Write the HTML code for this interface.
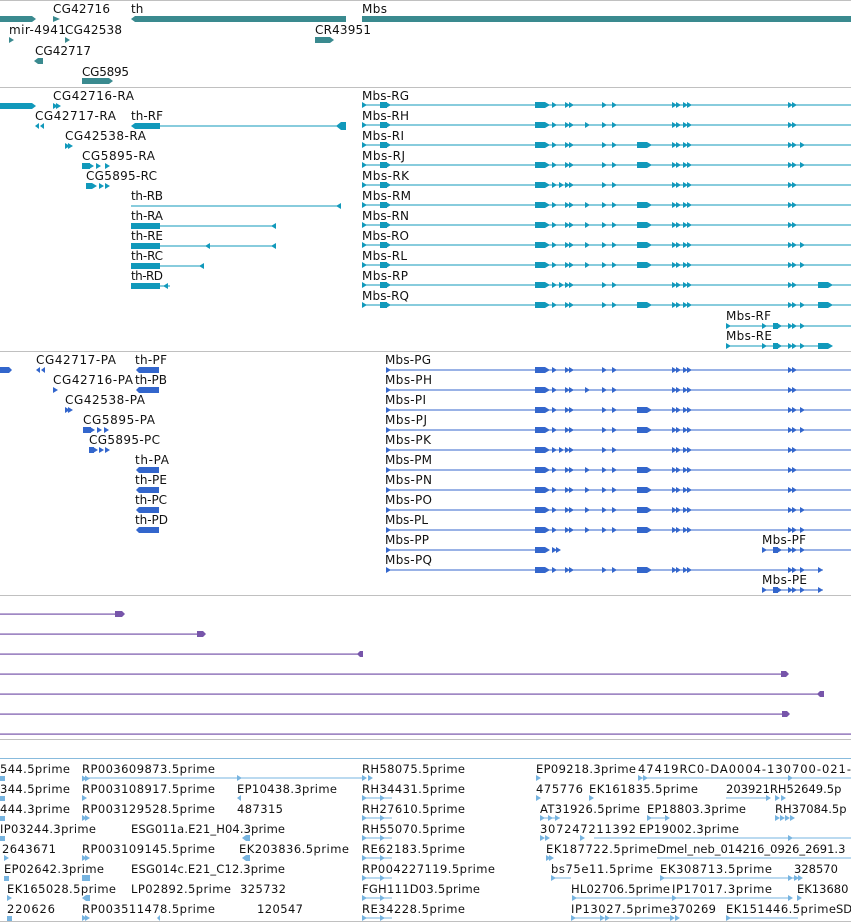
<!DOCTYPE html>
<html><head><meta charset="utf-8"><style>
html,body{margin:0;padding:0;background:#fff;}
svg{display:block;}
text{font-family:"DejaVu Sans","Liberation Sans",sans-serif;font-size:12px;fill:#111;}
.b text{font-size:11.5px;}
</style></head><body>
<svg width="851" height="923" viewBox="0 0 851 923" xmlns="http://www.w3.org/2000/svg">
<defs>
<polygon id="a" points="0,-3 5,0 0,3"/>
<g id="core">
 <rect x="535" y="-3" width="10" height="6"/><use href="#a" x="545"/>
 <use href="#a" x="552"/><use href="#a" x="565"/><use href="#a" x="569"/>
 <use href="#a" x="602"/><use href="#a" x="612"/>
 <use href="#a" x="672"/><use href="#a" x="676"/><use href="#a" x="683"/><use href="#a" x="687"/>
 <use href="#a" x="788"/><use href="#a" x="792"/>
</g>
<g id="x585"><use href="#a" x="585"/></g>
<g id="x637"><rect x="637" y="-3" width="10" height="6"/><use href="#a" x="647"/></g>
<g id="x800"><use href="#a" x="800"/></g>
<g id="x818"><rect x="818" y="-3" width="10" height="6"/><use href="#a" x="828"/></g>
<g id="rs"><rect x="362" y="-0.5" width="489" height="1"/><use href="#a" x="362"/><rect x="380" y="-3" width="7" height="6"/><use href="#a" x="386"/></g>
<g id="ps"><rect x="386" y="-0.5" width="465" height="1"/><use href="#a" x="386"/></g>
</defs>

<rect x="0" y="0" width="851" height="1" fill="#c0c0c0"/>
<rect x="0" y="87" width="851" height="1" fill="#c0c0c0"/>
<rect x="0" y="351" width="851" height="1" fill="#c0c0c0"/>
<rect x="0" y="595" width="851" height="1" fill="#c0c0c0"/>
<rect x="0" y="739" width="851" height="1" fill="#c0c0c0"/>
<rect x="0" y="758" width="851" height="1" fill="#88bbdd"/>
<rect x="0" y="921" width="851" height="1" fill="#c0c0c0"/>

<g fill="#3a8a8f">
 <rect x="0" y="16" width="32" height="6"/><polygon points="32,16 36,19 32,22"/>
 <polygon points="53,16 60,19 53,22"/>
 <rect x="135" y="16" width="211" height="6"/><polygon points="131,19 135,16 135,22"/>
 <rect x="362" y="16" width="489" height="6"/>
 <polygon points="9,37 14,40 9,43"/><polygon points="65,37 70,40 65,43"/>
 <rect x="315" y="37" width="15" height="6"/><polygon points="330,37 334,40 330,43"/>
 <rect x="38" y="58" width="5" height="6"/><polygon points="34,61 38,58 38,64"/>
 <rect x="82" y="78" width="27" height="6"/><polygon points="109,78 113,81 109,84"/>
</g>
<text x="53" y="13" textLength="57">CG42716</text>
<text x="131" y="13">th</text>
<text x="362" y="13" textLength="25">Mbs</text>
<text x="9" y="34" textLength="57">mir-4941</text>
<text x="65" y="34" textLength="57">CG42538</text>
<text x="315" y="34" textLength="56">CR43951</text>
<text x="35" y="55" textLength="56">CG42717</text>
<text x="82" y="76" textLength="47">CG5895</text>

<g fill="#1199bb">
 <rect x="0" y="103" width="32" height="6"/><polygon points="32,103 36,106 32,109"/>
 <use href="#a" x="53" y="106"/><use href="#a" x="56" y="106"/>
 <polygon points="35,126 39,123 39,129"/><polygon points="40,126 44,123 44,129"/>
 <rect x="135" y="123" width="25" height="6"/><polygon points="131,126 135,123 135,129"/>
 <rect x="160" y="125.5" width="186" height="1"/><polygon points="336,126 341,122 346,122 346,130 341,130"/>
 <use href="#a" x="65" y="146"/><use href="#a" x="68" y="146"/>
 <rect x="82" y="163" width="8" height="6"/><use href="#a" x="89" y="166"/><use href="#a" x="96" y="166"/><use href="#a" x="105" y="166"/>
 <rect x="86" y="183" width="6" height="6"/><use href="#a" x="92" y="186"/><use href="#a" x="105" y="186"/><use href="#a" x="99" y="186"/>
 <rect x="131" y="205.5" width="210" height="1"/><polygon points="336,206 341,203 341,209"/>
 <rect x="131" y="223" width="29" height="6"/><rect x="160" y="225.5" width="116" height="1"/><polygon points="271,226 276,223 276,229"/>
 <rect x="131" y="243" width="29" height="6"/><rect x="160" y="245.5" width="116" height="1"/><polygon points="205,246 210,243 210,249"/><polygon points="271,246 276,243 276,249"/>
 <rect x="131" y="263" width="29" height="6"/><rect x="160" y="265.5" width="44" height="1"/><polygon points="199,266 204,263 204,269"/>
 <rect x="131" y="283" width="29" height="6"/><rect x="160" y="285.5" width="10" height="1"/><polygon points="163,286 168,283 168,289"/>

 <use href="#rs" y="105"/><use href="#core" y="105"/>
 <use href="#rs" y="125"/><use href="#core" y="125"/><use href="#x585" y="125"/>
 <use href="#rs" y="145"/><use href="#core" y="145"/><use href="#x637" y="145"/><use href="#x800" y="145"/>
 <use href="#rs" y="165"/><use href="#core" y="165"/><use href="#x637" y="165"/><use href="#x800" y="165"/>
 <use href="#rs" y="185"/><use href="#core" y="185"/><use href="#a" x="559" y="185"/>
 <use href="#rs" y="205"/><use href="#core" y="205"/><use href="#x585" y="205"/><use href="#x637" y="205"/>
 <use href="#rs" y="225"/><use href="#core" y="225"/><use href="#x585" y="225"/><use href="#x637" y="225"/>
 <use href="#rs" y="245"/><use href="#core" y="245"/><use href="#x585" y="245"/><use href="#x637" y="245"/><use href="#x800" y="245"/>
 <use href="#rs" y="265"/><use href="#core" y="265"/><use href="#x585" y="265"/><use href="#x637" y="265"/><use href="#x800" y="265"/>
 <use href="#rs" y="285"/><use href="#core" y="285"/><use href="#a" x="559" y="285"/><use href="#x818" y="285"/>
 <use href="#rs" y="305"/><use href="#core" y="305"/><use href="#x637" y="305"/><use href="#x800" y="305"/><use href="#x818" y="305"/>
 <rect x="726" y="325.5" width="125" height="1"/><use href="#a" x="726" y="326"/><use href="#a" x="762" y="326"/><rect x="773" y="323" width="5" height="6"/><use href="#a" x="777" y="326"/><use href="#a" x="788" y="326"/><use href="#a" x="792" y="326"/><use href="#a" x="800" y="326"/>
 <rect x="726" y="345.5" width="106" height="1"/><use href="#a" x="726" y="346"/><use href="#a" x="762" y="346"/><rect x="773" y="343" width="5" height="6"/><use href="#a" x="777" y="346"/><use href="#a" x="788" y="346"/><use href="#a" x="792" y="346"/><use href="#a" x="800" y="346"/><use href="#x818" y="346"/>
</g>
<text x="53" y="100" textLength="81">CG42716-RA</text>
<text x="35" y="120" textLength="81">CG42717-RA</text>
<text x="131" y="120" textLength="32">th-RF</text>
<text x="65" y="140" textLength="81">CG42538-RA</text>
<text x="82" y="160" textLength="73">CG5895-RA</text>
<text x="86" y="180" textLength="71">CG5895-RC</text>
<text x="131" y="200" textLength="32">th-RB</text>
<text x="131" y="220" textLength="32">th-RA</text>
<text x="131" y="240" textLength="32">th-RE</text>
<text x="131" y="260" textLength="32">th-RC</text>
<text x="131" y="280" textLength="32">th-RD</text>
<text x="362" y="100" textLength="47">Mbs-RG</text>
<text x="362" y="120" textLength="47">Mbs-RH</text>
<text x="362" y="140" textLength="42">Mbs-RI</text>
<text x="362" y="160" textLength="43">Mbs-RJ</text>
<text x="362" y="180" textLength="47">Mbs-RK</text>
<text x="362" y="200" textLength="49">Mbs-RM</text>
<text x="362" y="220" textLength="47">Mbs-RN</text>
<text x="362" y="240" textLength="47">Mbs-RO</text>
<text x="362" y="260" textLength="45">Mbs-RL</text>
<text x="362" y="280" textLength="46">Mbs-RP</text>
<text x="362" y="300" textLength="47">Mbs-RQ</text>
<text x="726" y="320" textLength="45">Mbs-RF</text>
<text x="726" y="340" textLength="46">Mbs-RE</text>

<g fill="#3366cc">
 <rect x="0" y="367" width="9" height="6"/><polygon points="9,367 12,370 9,373"/>
 <polygon points="36,370 40,367 40,373"/><polygon points="41,370 45,367 45,373"/>
 <rect x="139" y="367" width="20" height="6"/><polygon points="136,370 139,367 139,373"/>
 <use href="#a" x="53" y="390"/>
 <rect x="139" y="387" width="20" height="6"/><polygon points="136,390 139,387 139,393"/>
 <use href="#a" x="65" y="410"/><use href="#a" x="68" y="410"/>
 <rect x="83" y="427" width="8" height="6"/><use href="#a" x="90" y="430"/><use href="#a" x="97" y="430"/><use href="#a" x="104" y="430"/>
 <rect x="89" y="447" width="5" height="6"/><use href="#a" x="93" y="450"/><use href="#a" x="99" y="450"/><use href="#a" x="105" y="450"/>
 <rect x="139" y="467" width="20" height="6"/><polygon points="136,470 139,467 139,473"/>
 <rect x="139" y="487" width="20" height="6"/><polygon points="136,490 139,487 139,493"/>
 <rect x="139" y="507" width="20" height="6"/><polygon points="136,510 139,507 139,513"/>
 <rect x="139" y="527" width="20" height="6"/><polygon points="136,530 139,527 139,533"/>

 <use href="#ps" y="370"/><use href="#core" y="370"/>
 <use href="#ps" y="390"/><use href="#core" y="390"/><use href="#x585" y="390"/>
 <use href="#ps" y="410"/><use href="#core" y="410"/><use href="#x637" y="410"/><use href="#x800" y="410"/>
 <use href="#ps" y="430"/><use href="#core" y="430"/><use href="#x637" y="430"/><use href="#x800" y="430"/>
 <use href="#ps" y="450"/><use href="#core" y="450"/><use href="#a" x="559" y="450"/>
 <use href="#ps" y="470"/><use href="#core" y="470"/><use href="#x585" y="470"/><use href="#x637" y="470"/>
 <use href="#ps" y="490"/><use href="#core" y="490"/><use href="#x585" y="490"/><use href="#x637" y="490"/>
 <use href="#ps" y="510"/><use href="#core" y="510"/><use href="#x585" y="510"/><use href="#x637" y="510"/><use href="#x800" y="510"/>
 <use href="#ps" y="530"/><use href="#core" y="530"/><use href="#x585" y="530"/><use href="#x637" y="530"/><use href="#x800" y="530"/>
 <rect x="386" y="549.5" width="150" height="1"/><use href="#a" x="386" y="550"/><rect x="535" y="547" width="10" height="6"/><use href="#a" x="545" y="550"/><use href="#a" x="552" y="550"/><use href="#a" x="556" y="550"/>
 <rect x="762" y="549.5" width="89" height="1"/><use href="#a" x="762" y="550"/><rect x="773" y="547" width="5" height="6"/><use href="#a" x="777" y="550"/><use href="#a" x="788" y="550"/><use href="#a" x="792" y="550"/><use href="#a" x="800" y="550"/>
 <rect x="386" y="569.5" width="437" height="1"/><use href="#a" x="386" y="570"/><use href="#core" y="570"/><use href="#x637" y="570"/><use href="#x800" y="570"/><use href="#a" x="818" y="570"/>
 <rect x="762" y="589.5" width="61" height="1"/><use href="#a" x="762" y="590"/><rect x="773" y="587" width="5" height="6"/><use href="#a" x="777" y="590"/><use href="#a" x="788" y="590"/><use href="#a" x="792" y="590"/><use href="#a" x="800" y="590"/><use href="#a" x="818" y="590"/>
</g>
<text x="36" y="364" textLength="80">CG42717-PA</text>
<text x="135" y="364" textLength="32">th-PF</text>
<text x="53" y="384" textLength="80">CG42716-PA</text>
<text x="135" y="384" textLength="32">th-PB</text>
<text x="65" y="404" textLength="80">CG42538-PA</text>
<text x="83" y="424" textLength="72">CG5895-PA</text>
<text x="89" y="444" textLength="71">CG5895-PC</text>
<text x="135" y="464" textLength="34">th-PA</text>
<text x="135" y="484" textLength="32">th-PE</text>
<text x="135" y="504" textLength="32">th-PC</text>
<text x="135" y="524" textLength="33">th-PD</text>
<text x="385" y="364" textLength="46">Mbs-PG</text>
<text x="385" y="384" textLength="47">Mbs-PH</text>
<text x="385" y="404" textLength="41">Mbs-PI</text>
<text x="385" y="424" textLength="42">Mbs-PJ</text>
<text x="385" y="444" textLength="46">Mbs-PK</text>
<text x="385" y="464" textLength="47">Mbs-PM</text>
<text x="385" y="484" textLength="47">Mbs-PN</text>
<text x="385" y="504" textLength="47">Mbs-PO</text>
<text x="385" y="524" textLength="43">Mbs-PL</text>
<text x="385" y="544" textLength="44">Mbs-PP</text>
<text x="385" y="564" textLength="47">Mbs-PQ</text>
<text x="762" y="544" textLength="44">Mbs-PF</text>
<text x="762" y="584" textLength="45">Mbs-PE</text>

<g fill="#7755aa">
 <rect x="0" y="613.5" width="118" height="1.2"/><polygon points="115,611 122,611 125,614 122,617 115,617"/>
 <rect x="0" y="633.5" width="200" height="1.2"/><polygon points="197,631 203,631 206,634 203,637 197,637"/>
 <rect x="0" y="653.5" width="362" height="1.2"/><polygon points="357,654 360,651 363,651 363,657 360,657"/>
 <rect x="0" y="673.5" width="785" height="1.2"/><polygon points="781,671 786,671 789,674 786,677 781,677"/>
 <rect x="0" y="693.5" width="823" height="1.2"/><polygon points="817,694 820,691 824,691 824,697 820,697"/>
 <rect x="0" y="713.5" width="786" height="1.2"/><polygon points="782,711 787,711 790,714 787,717 782,717"/>
 <rect x="0" y="733.5" width="851" height="1.2"/>
</g>

<g fill="#77b4e0">
 <rect x="0" y="776" width="5" height="5"/><use href="#a" x="82" y="778.5"/><use href="#a" x="85" y="778.5"/><rect x="82" y="777.5" width="280" height="1"/><use href="#a" x="237" y="778"/><use href="#a" x="362" y="778"/><use href="#a" x="368" y="778"/>
 <use href="#a" x="536" y="778"/><rect x="638" y="777.5" width="213" height="1"/><use href="#a" x="638" y="778"/><use href="#a" x="643" y="778"/><use href="#a" x="788" y="778"/>
 <rect x="0" y="796" width="5" height="5"/><use href="#a" x="82" y="798"/><polygon points="237,798 241,795 241,801"/><rect x="362" y="797.5" width="30" height="1"/><use href="#a" x="362" y="798"/><use href="#a" x="380" y="798"/><use href="#a" x="536" y="798"/><use href="#a" x="589" y="798"/><rect x="726" y="797.5" width="40" height="1"/><use href="#a" x="766" y="798"/><use href="#a" x="775" y="798"/><use href="#a" x="781" y="798"/>
 <rect x="0" y="816" width="5" height="5"/><use href="#a" x="82" y="818"/><use href="#a" x="85" y="818"/><rect x="362" y="817.5" width="30" height="1"/><use href="#a" x="362" y="818"/><use href="#a" x="380" y="818"/><rect x="540" y="817.5" width="20" height="1"/><use href="#a" x="540" y="818"/><use href="#a" x="548" y="818"/><use href="#a" x="555" y="818"/><rect x="647" y="817.5" width="22" height="1"/><use href="#a" x="647" y="818"/><use href="#a" x="665" y="818"/><use href="#a" x="775" y="818"/><use href="#a" x="780" y="818"/><use href="#a" x="785" y="818"/><use href="#a" x="790" y="818"/>
 <rect x="0" y="836" width="5" height="5"/><polygon points="242,838 246,835 250,835 250,841 246,841"/><rect x="362" y="837.5" width="30" height="1"/><use href="#a" x="362" y="838"/><use href="#a" x="380" y="838"/><use href="#a" x="540" y="838"/><use href="#a" x="545" y="838"/><use href="#a" x="580" y="838"/>
 <rect x="594" y="837.5" width="257" height="1"/><use href="#a" x="788" y="838"/>
 <use href="#a" x="4" y="858"/><use href="#a" x="82" y="858"/><use href="#a" x="85" y="858"/><polygon points="242,858 246,855 250,855 250,861 246,861"/><rect x="362" y="857.5" width="30" height="1"/><use href="#a" x="362" y="858"/><use href="#a" x="380" y="858"/><use href="#a" x="546" y="858"/><use href="#a" x="549" y="858"/><rect x="657" y="857.5" width="194" height="1"/>
 <rect x="4" y="876" width="5" height="5"/><rect x="82" y="875" width="8" height="6"/><rect x="362" y="877.5" width="30" height="1"/><use href="#a" x="362" y="878"/><use href="#a" x="380" y="878"/><rect x="551" y="877.5" width="20" height="1"/><use href="#a" x="551" y="878"/><rect x="660" y="877.5" width="140" height="1"/><use href="#a" x="660" y="878"/><use href="#a" x="788" y="878"/><use href="#a" x="794" y="878"/><use href="#a" x="798" y="878"/>
 <use href="#a" x="7" y="898"/><polygon points="82,898 86,895 90,895 90,901 86,901"/><rect x="362" y="897.5" width="30" height="1"/><use href="#a" x="362" y="898"/><use href="#a" x="380" y="898"/><rect x="572" y="897.5" width="220" height="1"/><use href="#a" x="572" y="898"/><use href="#a" x="672" y="898"/><use href="#a" x="788" y="898"/><use href="#a" x="797" y="898"/>
 <rect x="7" y="916" width="5" height="5"/><use href="#a" x="82" y="918"/><use href="#a" x="85" y="918"/><polygon points="157,918 160,915 160,921"/><rect x="362" y="917.5" width="30" height="1"/><use href="#a" x="362" y="918"/><use href="#a" x="380" y="918"/><rect x="571" y="917.5" width="100" height="1"/><use href="#a" x="571" y="918"/><use href="#a" x="600" y="918"/><use href="#a" x="605" y="918"/><use href="#a" x="670" y="918"/><use href="#a" x="675" y="918"/><rect x="726" y="917.5" width="72" height="1"/><use href="#a" x="726" y="918"/>
</g>
<g class="b">
<text x="0" y="773" textLength="70">544.5prime</text><text x="82" y="773" textLength="133">RP003609873.5prime</text><text x="362" y="773" textLength="103">RH58075.5prime</text><text x="536" y="773" textLength="100">EP09218.3prime</text><text x="638" y="773" textLength="213">47419RC0-DA0004-130700-021-</text>
<text x="0" y="793" textLength="70">344.5prime</text><text x="82" y="793" textLength="133">RP003108917.5prime</text><text x="237" y="793" textLength="100">EP10438.3prime</text><text x="362" y="793" textLength="103">RH34431.5prime</text><text x="536" y="793" textLength="47">475776</text><text x="589" y="793" textLength="109">EK161835.5prime</text><text x="726" y="793">203921RH52649.5p</text>
<text x="0" y="813" textLength="70">444.3prime</text><text x="82" y="813" textLength="133">RP003129528.5prime</text><text x="237" y="813" textLength="46">487315</text><text x="362" y="813" textLength="103">RH27610.5prime</text><text x="540" y="813" textLength="100">AT31926.5prime</text><text x="647" y="813" textLength="99">EP18803.3prime</text><text x="775" y="813">RH37084.5p</text>
<text x="0" y="833" textLength="96">IP03244.3prime</text><text x="131" y="833" textLength="154">ESG011a.E21_H04.3prime</text><text x="362" y="833" textLength="103">RH55070.5prime</text><text x="540" y="833" textLength="96">307247211392</text><text x="639" y="833" textLength="100">EP19002.3prime</text>
<text x="2" y="853" textLength="54">2643671</text><text x="82" y="853" textLength="133">RP003109145.5prime</text><text x="239" y="853" textLength="110">EK203836.5prime</text><text x="362" y="853" textLength="103">RE62183.5prime</text><text x="546" y="853" textLength="111">EK187722.5prime</text><text x="657" y="853">Dmel_neb_014216_0926_2691.3</text>
<text x="4" y="873" textLength="100">EP02642.3prime</text><text x="131" y="873" textLength="154">ESG014c.E21_C12.3prime</text><text x="362" y="873" textLength="133">RP004227119.5prime</text><text x="551" y="873" textLength="102">bs75e11.5prime</text><text x="660" y="873" textLength="112">EK308713.5prime</text><text x="794" y="873">328570</text>
<text x="7" y="893" textLength="109">EK165028.5prime</text><text x="131" y="893" textLength="100">LP02892.5prime</text><text x="240" y="893" textLength="46">325732</text><text x="362" y="893" textLength="118">FGH111D03.5prime</text><text x="571" y="893" textLength="99">HL02706.5prime</text><text x="672" y="893" textLength="100">IP17017.3prime</text><text x="797" y="893">EK13680</text>
<text x="7" y="913" textLength="48">220626</text><text x="82" y="913" textLength="133">RP003511478.5prime</text><text x="257" y="913" textLength="46">120547</text><text x="362" y="913" textLength="103">RE34228.5prime</text><text x="571" y="913" textLength="99">IP13027.5prime</text><text x="670" y="913" textLength="46">370269</text><text x="726" y="913" textLength="110">EK151446.5prime</text><text x="836" y="913">SD</text>
</g>
</svg>
</body></html>
